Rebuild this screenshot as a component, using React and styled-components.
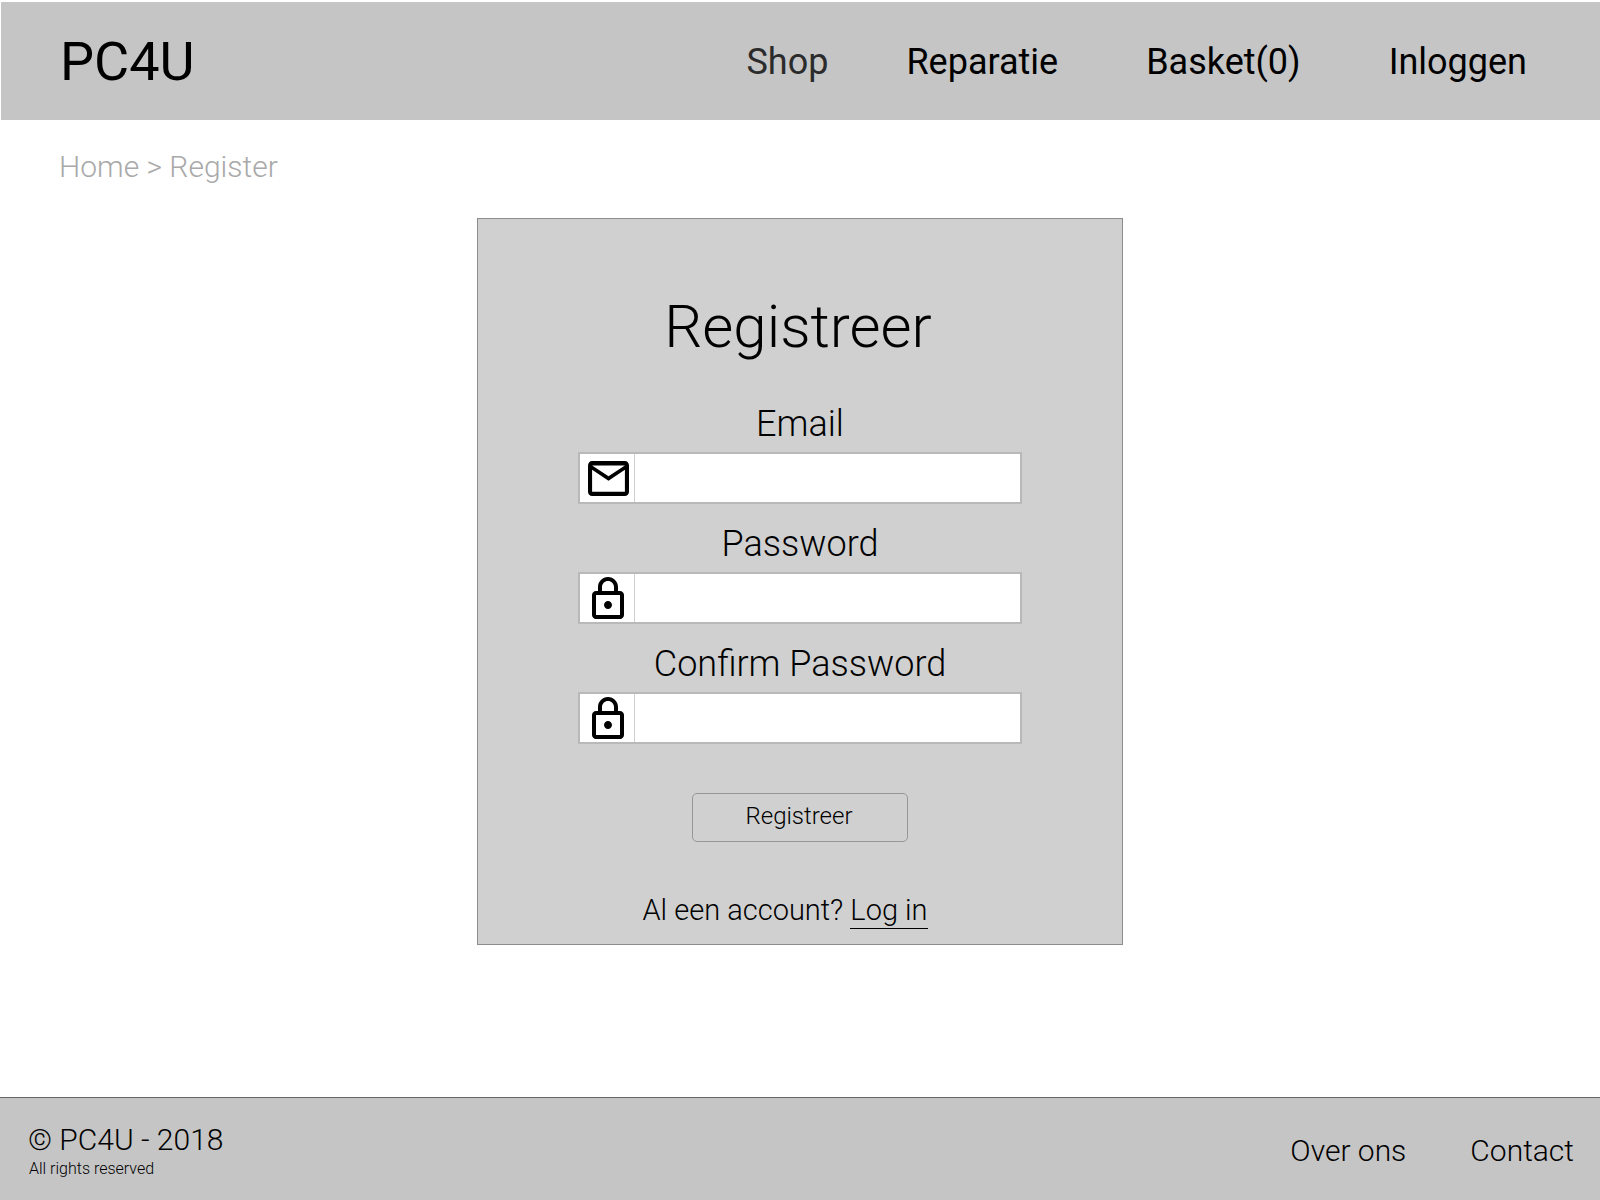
import React from "react";
import styled, { createGlobalStyle } from "styled-components";

const GlobalStyle = createGlobalStyle`
  * { box-sizing: border-box; }
  body { margin: 0; background: #fff; color: #000; font-family: Roboto, sans-serif; }
`;

const Page = styled.div`
  display: flex;
  flex-direction: column;
  min-height: 100vh;
`;

const Header = styled.header`
  display: flex;
  align-items: center;
  justify-content: space-between;
  height: 118px;
  margin: 2px 0 0 1px;
  padding: 2px 73px 0 59px;
  background: #c5c5c5;
`;

const Logo = styled.a`
  color: #000;
  font-size: 54px;
  line-height: 64px;
  text-decoration: none;
`;

const Nav = styled.nav`
  display: flex;
  gap: ${(p) => p.$gap}px;
`;

const NavLink = styled.a`
  color: ${(p) => (p.$active ? "#2b2b2b" : "#000")};
  font-size: 36px;
  font-weight: 400;
  line-height: 44px;
  text-decoration: none;

  & + & + & { margin-left: 10px; }
`;

const Breadcrumb = styled.nav`
  padding: 29px 59px 0;
  color: #a9a9a9;
  font-size: 30px;
  font-weight: 300;
  line-height: 36px;
  a { color: inherit; text-decoration: none; }
`;

const Main = styled.main`
  flex: 1;
  display: flex;
  flex-direction: column;
`;

const Card = styled.form`
  display: flex;
  flex-direction: column;
  align-items: center;
  width: 646px;
  max-width: 100%;
  margin: 33px auto 40px;
  padding: 72px 100px 15px;
  border: 1px solid #8c8c8c;
  background: #d0d0d0;
`;

const Title = styled.h1`
  margin: 0 4px 39px 0;
  font-size: 60px;
  font-weight: 300;
  line-height: 72px;
`;

const Field = styled.div`
  display: flex;
  flex-direction: column;
  align-items: center;
  width: 100%;
  margin-bottom: 18px;
`;

const Label = styled.label`
  margin-bottom: 6px;
  font-size: 36px;
  font-weight: 300;
  line-height: 44px;
`;

const InputBox = styled.div`
  display: flex;
  width: 100%;
  height: 52px;
  border: 2px solid #b9b9b9;
  background: #fff;
`;

const IconCell = styled.span`
  display: flex;
  align-items: center;
  justify-content: center;
  width: 55px;
  padding-left: 2px;
  border-right: 1px solid #d0d0d0;
`;

const Input = styled.input`
  flex: 1;
  min-width: 0;
  padding: 0 12px;
  border: 0;
  background: transparent;
  font: 300 24px Roboto, sans-serif;
`;

const Submit = styled.button`
  width: 216px;
  height: 49px;
  margin: 31px 0 50px;
  padding: 0 2px 4px 0;
  border: 1px solid #979797;
  border-radius: 5px;
  background: transparent;
  color: #000;
  font: 300 24px/28px Roboto, sans-serif;
`;

const LoginLine = styled.p`
  margin: 0 30px 0 0;
  font-size: 29px;
  font-weight: 300;
  line-height: 36px;
`;

const LoginLink = styled.a`
  display: inline-block;
  border-bottom: 1px solid #000;
  color: #000;
  text-decoration: none;
`;

const Footer = styled.footer`
  display: flex;
  align-items: center;
  justify-content: space-between;
  height: 103px;
  padding: 3px 26px 0 28px;
  border-top: 1px solid #666;
  background: #c5c5c5;
`;

const Copyright = styled.div`
  font-size: 30px;
  font-weight: 300;
  line-height: 36px;
`;

const Rights = styled.small`
  display: block;
  padding-left: 1px;
  font-size: 16px;
  line-height: 22px;
`;

const FooterLink = styled.a`
  color: #000;
  font-size: 30px;
  font-weight: 300;
  line-height: 36px;
  text-decoration: none;
`;

const MailIcon = () => (
  <svg width="41" height="35" viewBox="2 4 20 16" preserveAspectRatio="none" aria-hidden="true">
    <path d="M20 4H4c-1.100 0-1.990.9-1.990 2L2 18c0 1.100.9 2 2 2h16c1.100 0 2-.9 2-2V6c0-1.100-.9-2-2-2zm0 14H4V8l8 5 8-5v10zm-8-7L4 6h16l-8 5z" />
  </svg>
);

const LockIcon = () => (
  <svg width="32" height="42" viewBox="4 1 16 21" aria-hidden="true">
    <path d="M18 8h-1V6c0-2.760-2.240-5-5-5S7 3.240 7 6v2H6c-1.100 0-2 .9-2 2v10c0 1.100.9 2 2 2h12c1.100 0 2-.9 2-2V10c0-1.100-.9-2-2-2zM9 6c0-1.660 1.340-3 3-3s3 1.340 3 3v2H9V6zm9 14H6V10h12v10zm-6-3c1.100 0 2-.9 2-2s-.9-2-2-2-2 .9-2 2 .9 2 2 2z" />
  </svg>
);

const fields = [
  { id: "email", label: "Email", type: "email", Icon: MailIcon },
  { id: "password", label: "Password", type: "password", Icon: LockIcon },
  { id: "confirm", label: "Confirm Password", type: "password", Icon: LockIcon },
];

export default function App() {
  return (
    <Page>
      <GlobalStyle />
      <Header>
        <Logo href="#">PC4U</Logo>
        <Nav $gap={78}>
          <NavLink href="#" $active>Shop</NavLink>
          <NavLink href="#">Reparatie</NavLink>
          <NavLink href="#">Basket(0)</NavLink>
          <NavLink href="#">Inloggen</NavLink>
        </Nav>
      </Header>
      <Main>
        <Breadcrumb><a href="#">Home</a> &gt; <a href="#">Register</a></Breadcrumb>
        <Card>
          <Title>Registreer</Title>
          {fields.map(({ id, label, type, Icon }) => (
            <Field key={id}>
              <Label htmlFor={id}>{label}</Label>
              <InputBox>
                <IconCell><Icon /></IconCell>
                <Input id={id} type={type} />
              </InputBox>
            </Field>
          ))}
          <Submit type="button">Registreer</Submit>
          <LoginLine>Al een account? <LoginLink href="#">Log in</LoginLink></LoginLine>
        </Card>
      </Main>
      <Footer>
        <Copyright>© PC4U - 2018<Rights>All rights reserved</Rights></Copyright>
        <Nav $gap={64}>
          <FooterLink href="#">Over ons</FooterLink>
          <FooterLink href="#">Contact</FooterLink>
        </Nav>
      </Footer>
    </Page>
  );
}
